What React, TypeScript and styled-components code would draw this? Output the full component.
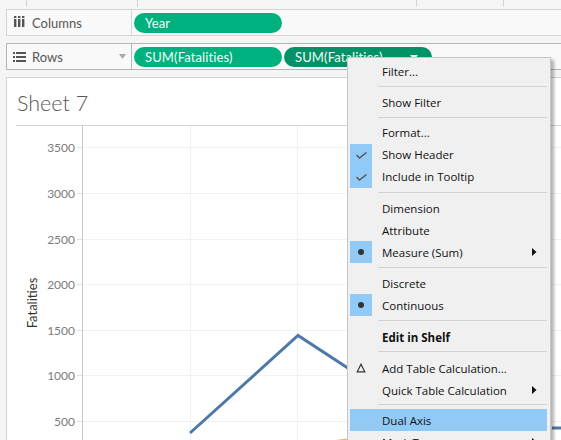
import React from "react";
import styled, { createGlobalStyle } from "styled-components";

const Global = createGlobalStyle`
  html, body { margin: 0; padding: 0; background: #f5f5f5; width: 561px; height: 440px; overflow: hidden; }
  body { font-family: Lato, "Liberation Sans", sans-serif; }
`;

const Page = styled.div`
  position: relative;
  width: 561px;
  height: 440px;
  overflow: hidden;
  background: #f5f5f5;
  display: flex;
  flex-direction: column;
`;

const TopStrip = styled.div`
  height: 9px;
  display: flex;
  flex-shrink: 0;
`;

const TopTick = styled.span<{ $w: number }>`
  width: ${(p) => p.$w}px;
  height: 7px;
  border-right: 1px solid #d4d4d4;
  flex-shrink: 0;
`;

const Shelf = styled.div<{ $active?: boolean }>`
  display: flex;
  height: 27px;
  box-sizing: border-box;
  margin-left: 6px;
  background: #f9f9f9;
  border-top: 1px solid ${(p) => (p.$active ? "#b4b4b4" : "#d4d4d4")};
  border-bottom: 1px solid ${(p) => (p.$active ? "#b4b4b4" : "#d4d4d4")};
  border-left: 1px solid ${(p) => (p.$active ? "#b4b4b4" : "#d4d4d4")};
  flex-shrink: 0;
`;

const ShelfLabel = styled.div<{ $active?: boolean }>`
  width: 125px;
  display: flex;
  align-items: center;
  border-right: 1px solid ${(p) => (p.$active ? "#b4b4b4" : "#d4d4d4")};
  padding-left: 6px;
  box-sizing: border-box;
  color: #555;
  font-size: 13px;
  flex-shrink: 0;
`;

const ShelfIcon = styled.svg`
  width: 13px;
  height: 13px;
  margin-right: 6px;
  flex-shrink: 0;
`;

const ShelfCaret = styled.svg`
  width: 7px;
  height: 5px;
  margin-left: auto;
  margin-right: 5px;
`;

const Pills = styled.div`
  display: flex;
  align-items: center;
  gap: 2px;
  padding-left: 2px;
`;

const Pill = styled.div<{ $dark?: boolean }>`
  width: 148px;
  height: 20px;
  border-radius: 10px;
  background: ${(p) => (p.$dark ? "#039268" : "#00b180")};
  color: #f1fbf7;
  font-size: 13px;
  letter-spacing: 0.12px;
  line-height: 20px;
  padding-left: 11px;
  box-sizing: border-box;
  position: relative;
`;

const PillCaret = styled.svg`
  position: absolute;
  right: 14px;
  top: 8px;
  width: 8px;
  height: 5px;
`;

const ShelfGap = styled.div`
  height: 7px;
  flex-shrink: 0;
`;

const Card = styled.div`
  margin: 7px 0 0 6px;
  flex: 1;
  background: #fff;
  border-top: 1px solid #d4d4d4;
  border-left: 1px solid #d4d4d4;
  display: flex;
  flex-direction: column;
`;

const Title = styled.div`
  height: 47px;
  flex-shrink: 0;
  font-size: 21.5px;
  font-weight: 300;
  color: #555;
  padding: 13px 0 0 10px;
  box-sizing: border-box;
  line-height: 24px;
`;

const ChartWrap = styled.div`
  position: relative;
  flex: 1;
  border-top: 1px solid #d4d4d4;
  margin-left: 9px;
`;

const ChartSvg = styled.svg`
  display: block;
  position: absolute;
  left: -16px;
  top: 0;
  width: 561px;
  height: 315px;
`;

const AxisTitle = styled.div`
  position: absolute;
  left: 16px;
  top: 177px;
  font-size: 13px;
  line-height: 14px;
  color: #333;
  white-space: nowrap;
  transform: translate(-50%, -50%) rotate(-90deg);
`;

const TickLabel = styled.div<{ $y: number }>`
  position: absolute;
  left: 10px;
  width: 49px;
  text-align: right;
  top: ${(p) => p.$y}px;
  font-size: 12px;
  line-height: 14px;
  color: #7c7c7c;
`;

const Menu = styled.div`
  position: absolute;
  left: 347px;
  top: 57px;
  width: 204px;
  height: 400px;
  box-sizing: border-box;
  background: #f0f0f0;
  border: 1px solid #c6c6c6;
  padding: 3px 3px 0 2px;
  box-shadow: 3px 3px 3px rgba(0, 0, 0, 0.3);
  font-family: "Open Sans", "Liberation Sans", sans-serif;
`;

const Row = styled.div<{ $hl?: boolean; $bold?: boolean }>`
  position: relative;
  height: 22px;
  display: flex;
  align-items: center;
  background: ${(p) => (p.$hl ? "#91c9f7" : "transparent")};
  color: #111;
  font-size: 11.5px;
  font-weight: ${(p) => (p.$bold ? 700 : 400)};
  white-space: nowrap;
`;

const RowText = styled.span<{ $raised?: boolean }>`
  margin-bottom: ${(p) => (p.$raised ? 2 : 0)}px;
`;

const Gutter = styled.div<{ $on?: boolean }>`
  width: 22px;
  height: 22px;
  margin-right: 10px;
  flex-shrink: 0;
  display: flex;
  align-items: center;
  justify-content: center;
  background: ${(p) => (p.$on ? "#91c9f7" : "transparent")};
`;

const Separator = styled.div<{ $above: number; $below: number }>`
  height: 1px;
  background: #d2d2d2;
  margin: ${(p) => p.$above}px 0 ${(p) => p.$below}px 28px;
`;

const Arrow = styled.svg`
  position: absolute;
  right: 10px;
  top: 7px;
  width: 5px;
  height: 8px;
`;

const Check = () => (
  <svg width="11" height="7" viewBox="0 0 11 7">
    <path d="M0.5 3l3 3L10.5 0.5" fill="none" stroke="#555" strokeWidth="1.4" />
  </svg>
);
const Dot = () => (
  <svg width="8" height="8" viewBox="0 0 8 8">
    <circle cx="4" cy="4" r="3" fill="#333" />
  </svg>
);
const Delta = () => (
  <svg width="10" height="10" viewBox="0 0 10 10">
    <path d="M5 1.2L1.2 8.8h7.6z" fill="none" stroke="#333" strokeWidth="1.2" />
  </svg>
);
const Sub = () => (
  <Arrow viewBox="0 0 5 8">
    <path d="M0 0l4.5 4L0 8z" fill="#111" />
  </Arrow>
);

const ticks = [
  { label: "3500", y: 147 },
  { label: "3000", y: 193 },
  { label: "2500", y: 239 },
  { label: "2000", y: 284 },
  { label: "1500", y: 330 },
  { label: "1000", y: 375 },
  { label: "500", y: 421 },
];

const chartTop = 126;

export default function App() {
  return (
    <Page>
      <Global />
      <TopStrip>
        <TopTick $w={26} />
        <TopTick $w={110} />
        <TopTick $w={278} />
        <TopTick $w={86} />
      </TopStrip>
      <Shelf>
        <ShelfLabel>
          <ShelfIcon viewBox="0 0 13 13">
            <path d="M1 3h2.4v8H1zM5 3h2.4v8H5zM9 3h2.4v8H9z" fill="#555" />
            <path d="M1 0h2.4v2H1zM5 0h2.4v2H5zM9 0h2.4v2H9z" fill="#555" />
          </ShelfIcon>
          Columns
        </ShelfLabel>
        <Pills>
          <Pill>Year</Pill>
        </Pills>
      </Shelf>
      <ShelfGap />
      <Shelf $active>
        <ShelfLabel $active>
          <ShelfIcon viewBox="0 0 13 13">
            <path d="M0 2h2v2H0zM0 6h2v2H0zM0 10h2v2H0zM3 2h10v2H3zM3 6h10v2H3zM3 10h10v2H3z" fill="#555" />
          </ShelfIcon>
          Rows
          <ShelfCaret viewBox="0 0 7 5">
            <path d="M0 0h7L3.5 5z" fill="#aaa" />
          </ShelfCaret>
        </ShelfLabel>
        <Pills>
          <Pill>SUM(Fatalities)</Pill>
          <Pill $dark>
            SUM(Fatalities)
            <PillCaret viewBox="0 0 8 5">
              <path d="M0 0h8L4 5z" fill="#e4f5ef" />
            </PillCaret>
          </Pill>
        </Pills>
      </Shelf>
      <Card>
        <Title>Sheet 7</Title>
        <ChartWrap>
          <ChartSvg viewBox="0 126 561 315">
            {ticks.map((t) => (
              <line key={t.y} x1="82" x2="561" y1={t.y + 0.5} y2={t.y + 0.5} stroke="#f1f1f1" />
            ))}
            <line x1="82.5" x2="82.5" y1="126" y2="440" stroke="#c8c8c8" />
            <line x1="190.5" x2="190.5" y1="126" y2="440" stroke="#f1f1f1" />
            <line x1="297.5" x2="297.5" y1="126" y2="440" stroke="#f1f1f1" />
            <line x1="413.5" x2="413.5" y1="126" y2="440" stroke="#f1f1f1" />
            {ticks.map((t) => (
              <line key={"t" + t.y} x1="77" x2="82" y1={t.y + 0.5} y2={t.y + 0.5} stroke="#e0e0e0" />
            ))}
            <polyline points="190,433 298,335.5 360,376" fill="none" stroke="#4e79a7" strokeWidth="3" />
            <line x1="552" x2="561" y1="428" y2="428" stroke="#4e79a7" strokeWidth="3" />
            <path d="M335 440 L347 438.5 L347 440 Z" fill="#f2b27a" />
          </ChartSvg>
          {ticks.map((t) => (
            <TickLabel key={t.label} $y={t.y - chartTop - 6}>
              {t.label}
            </TickLabel>
          ))}
          <AxisTitle>Fatalities</AxisTitle>
        </ChartWrap>
      </Card>
      <Menu>
        <Row><Gutter /><RowText $raised>Filter...</RowText></Row>
        <Separator $above={3} $below={5} />
        <Row><Gutter /><RowText $raised>Show Filter</RowText></Row>
        <Separator $above={3} $below={4} />
        <Row><Gutter /><RowText $raised>Format...</RowText></Row>
        <Row><Gutter $on><Check /></Gutter><RowText $raised>Show Header</RowText></Row>
        <Row><Gutter $on><Check /></Gutter><RowText $raised>Include in Tooltip</RowText></Row>
        <Separator $above={4} $below={4} />
        <Row><Gutter /><RowText>Dimension</RowText></Row>
        <Row><Gutter /><RowText>Attribute</RowText></Row>
        <Row><Gutter $on><Dot /></Gutter><RowText>Measure (Sum)</RowText><Sub /></Row>
        <Separator $above={4} $below={4} />
        <Row><Gutter /><RowText>Discrete</RowText></Row>
        <Row><Gutter $on><Dot /></Gutter><RowText>Continuous</RowText></Row>
        <Separator $above={4} $below={5} />
        <Row $bold><Gutter /><RowText>Edit in Shelf</RowText></Row>
        <Separator $above={3} $below={5} />
        <Row><Gutter><Delta /></Gutter><RowText>Add Table Calculation...</RowText></Row>
        <Row><Gutter /><RowText>Quick Table Calculation</RowText><Sub /></Row>
        <Separator $above={3} $below={4} />
        <Row $hl><Gutter /><RowText>Dual Axis</RowText></Row>
        <Row><Gutter /><RowText>Mark Type</RowText><Sub /></Row>
      </Menu>
    </Page>
  );
}
